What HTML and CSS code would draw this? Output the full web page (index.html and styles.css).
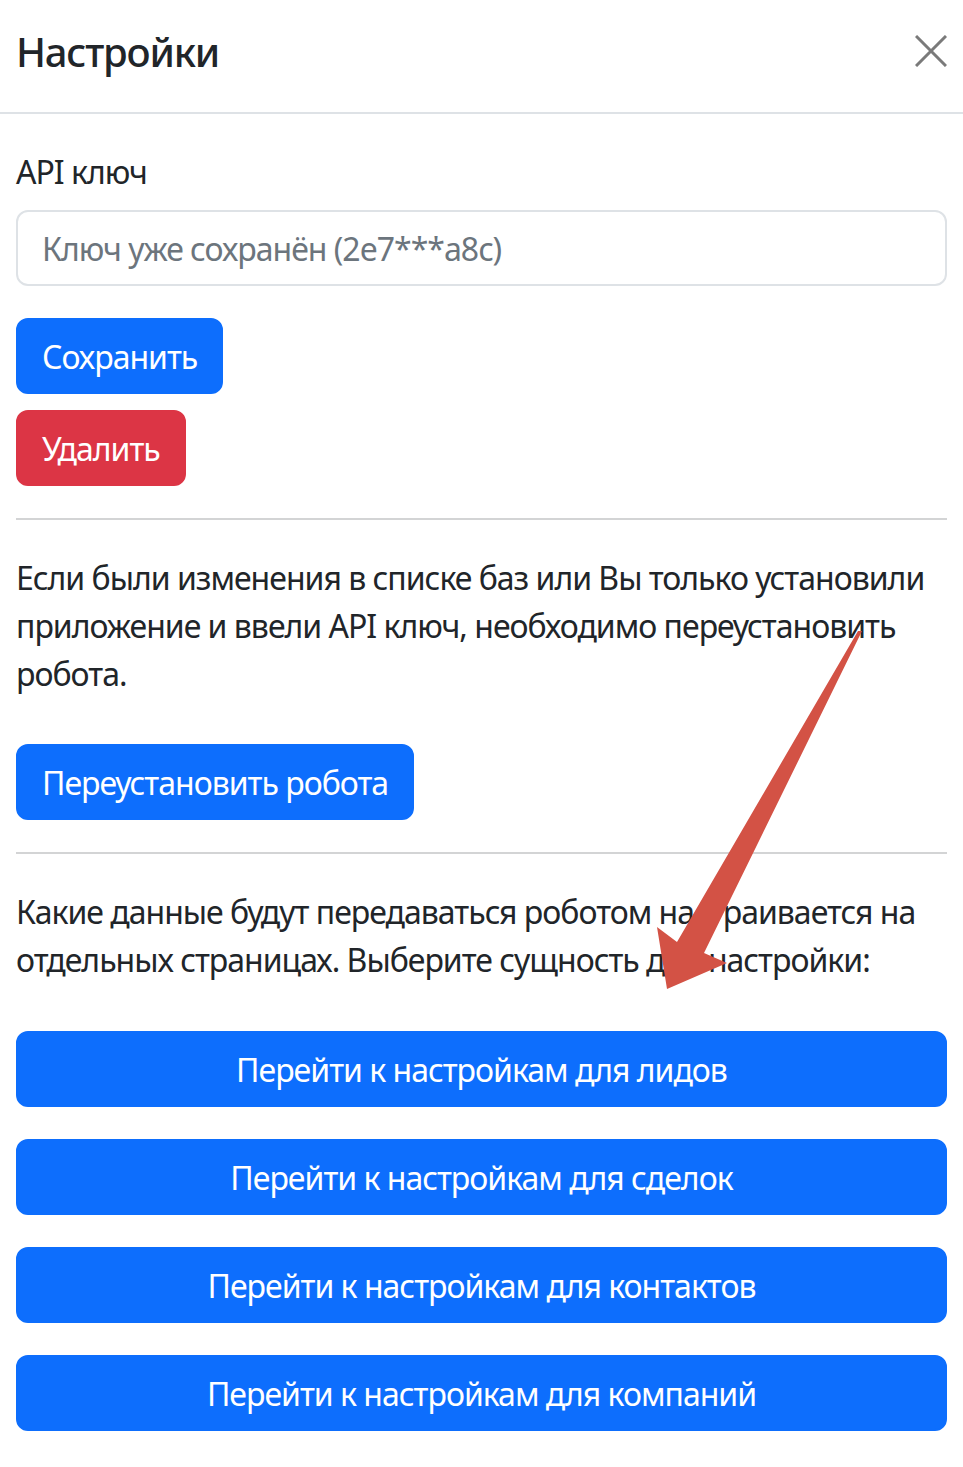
FILE: index.html
```html
<!DOCTYPE html>
<html lang="ru">
<head>
<meta charset="utf-8">
<title>Настройки</title>
<link rel="stylesheet" href="styles.css">
</head>
<body>
<div class="modal">
  <header class="modal-header">
    <h5 class="modal-title">Настройки</h5>
    <button class="btn-close" aria-label="Закрыть">
      <svg width="32" height="32" viewBox="0 0 32 32"><path d="M1 1 L31 31 M31 1 L1 31" stroke="#7a7a7a" stroke-width="3" fill="none"/></svg>
    </button>
  </header>
  <div class="modal-body">
    <label class="form-label" for="api">API ключ</label>
    <input id="api" class="form-control" type="text" placeholder="Ключ уже сохранён (2e7***a8c)">
    <div class="key-actions">
      <button class="btn btn-primary">Сохранить</button>
      <button class="btn btn-danger">Удалить</button>
    </div>
    <hr class="divider">
    <p class="text">Если были изменения в списке баз или Вы только установили приложение и ввели API ключ, необходимо переустановить робота.</p>
    <button class="btn btn-primary btn-reinstall">Переустановить робота</button>
    <hr class="divider">
    <p class="text">Какие данные будут передаваться роботом настраивается на отдельных страницах. Выберите сущность для настройки:</p>
    <div class="entity-list">
      <button class="btn btn-primary btn-block">Перейти к настройкам для лидов</button>
      <button class="btn btn-primary btn-block">Перейти к настройкам для сделок</button>
      <button class="btn btn-primary btn-block">Перейти к настройкам для контактов</button>
      <button class="btn btn-primary btn-block">Перейти к настройкам для компаний</button>
    </div>
  </div>
  <svg class="arrow" width="963" height="1467" viewBox="0 0 963 1467" aria-hidden="true">
    <polygon points="858,631 862,631 704,953 727,963 667,989 657,927 677,942" fill="#d35245"/>
  </svg>
</div>
</body>
</html>
```

FILE: styles.css
```css
* { box-sizing: border-box; }
html, body { margin: 0; padding: 0; background: #fff; }
body {
  font-family: "Noto Sans", "Open Sans", sans-serif;
  color: #212529;
  font-size: 32px;
  line-height: 48px;
  letter-spacing: -1px;
}
.modal {
  position: relative;
  width: 963px;
  min-height: 1467px;
}
.modal-header {
  display: flex;
  align-items: flex-start;
  justify-content: space-between;
  height: 114px;
  padding: 28px 16px 0 16px;
  border-bottom: 2px solid #dee2e6;
}
.modal-title {
  margin: 0;
  font-size: 40px;
  line-height: 48px;
  font-weight: 500;
  letter-spacing: -1.2px;
}
.btn-close {
  border: 0;
  background: transparent;
  padding: 0;
  margin-top: 7px;
  width: 32px;
  height: 32px;
  cursor: pointer;
}
.btn-close svg { display: block; }
.modal-body {
  padding: 34px 16px 32px;
}
.form-label {
  display: block;
  margin-bottom: 14px;
}
.form-control {
  display: block;
  width: 100%;
  height: 76px;
  padding: 12px 24px;
  font: inherit;
  letter-spacing: -1px;
  color: #212529;
  border: 2px solid #dee2e6;
  border-radius: 12px;
  background: #fff;
}
.form-control::placeholder { color: #6c757d; opacity: 1; }
.key-actions {
  display: flex;
  flex-direction: column;
  align-items: flex-start;
  gap: 16px;
  margin-top: 32px;
}
.btn {
  display: inline-block;
  font: inherit;
  letter-spacing: -1px;
  line-height: 48px;
  padding: 13px 24px 11px;
  border: 2px solid transparent;
  border-radius: 12px;
  color: #fff;
  cursor: pointer;
  text-align: center;
}
.btn-primary { background: #0d6efd; border-color: #0d6efd; }
.btn-danger { background: #dc3545; border-color: #dc3545; }
.divider {
  margin: 32px 0;
  border: 0;
  border-top: 2px solid #d3d4d5;
  height: 0;
}
.text { margin: 0 0 32px; padding-top: 2px; }
.btn-reinstall { margin-top: 14px; }
.entity-list {
  display: flex;
  flex-direction: column;
  gap: 32px;
  padding-top: 15px;
}
.btn-block { width: 100%; }
.arrow {
  position: absolute;
  left: 0;
  top: 0;
  pointer-events: none;
}
```
